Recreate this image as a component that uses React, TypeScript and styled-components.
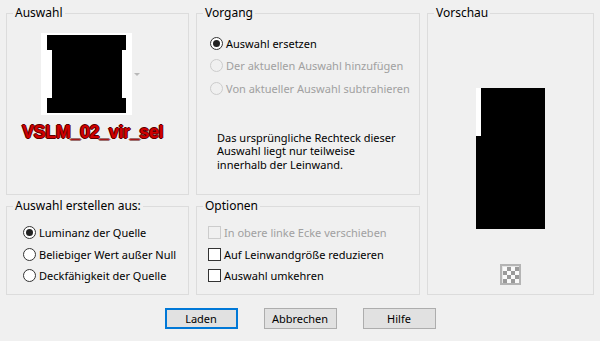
import styled, { createGlobalStyle } from 'styled-components';

const GlobalStyle = createGlobalStyle`
  html, body {
    margin: 0;
    padding: 0;
    background: #f0f0f0;
    font-family: "Noto Sans", "Liberation Sans", sans-serif;
    font-size: 11px;
    color: #000;
  }
`;

const Dialog = styled.div`
  width: 600px;
  height: 341px;
  box-sizing: border-box;
  padding: 5px 0 0 6px;
  display: flex;
  flex-direction: column;
`;

const PanelGrid = styled.div`
  display: grid;
  grid-template-columns: 183px 224px 167px;
  grid-template-rows: 190px 97px;
  column-gap: 7px;
  row-gap: 3px;
`;

const Panel = styled.fieldset<{ $area: string }>`
  margin: 0;
  padding: 0;
  min-width: 0;
  border: 1px solid #dcdcdc;
  display: flex;
  flex-direction: column;
  grid-area: ${(p) => p.$area};
`;

const Legend = styled.legend`
  margin-left: 6px;
  padding: 0 2px;
  font-size: 12px;
  line-height: 16px;
`;

const SourceBox = styled.div`
  padding: 12px 0 0 15px;
  display: flex;
  flex-direction: column;
`;

const ThumbRow = styled.div`
  display: flex;
  align-items: center;
  gap: 2px;
  margin-left: 19px;
`;

const DropArrow = styled.span`
  width: 0;
  height: 0;
  border-left: 3px solid transparent;
  border-right: 3px solid transparent;
  border-top: 3px solid #b8b8b8;
`;

const FileName = styled.div`
  margin-top: 7px;
  font-family: "Liberation Sans", Arial, sans-serif;
  font-weight: 700;
  font-size: 18px;
  line-height: 20px;
  letter-spacing: -0.4px;
  color: #d00000;
  text-shadow: 1px 0 0 #5a0000, -1px 0 0 #5a0000, 0 1px 0 #5a0000, 0 -1px 0 #5a0000;
`;

const OptionList = styled.div<{ $top: number; $left: number; $step: number }>`
  padding: ${(p) => p.$top}px 0 0 ${(p) => p.$left}px;
  display: flex;
  flex-direction: column;
  & > label {
    height: ${(p) => p.$step}px;
  }
`;

const Row = styled.label<{ $disabled?: boolean }>`
  display: flex;
  align-items: center;
  gap: 3px;
  white-space: nowrap;
  color: ${(p) => (p.$disabled ? '#a0a0a0' : '#000')};
`;

const Radio = styled.span<{ $checked?: boolean; $disabled?: boolean }>`
  flex-shrink: 0;
  box-sizing: border-box;
  width: 13px;
  height: 13px;
  border-radius: 50%;
  border: 1px solid ${(p) => (p.$disabled ? '#cccccc' : '#333333')};
  background: ${(p) => (p.$disabled ? '#f0f0f0' : '#ffffff')};
  display: flex;
  align-items: center;
  justify-content: center;
  &::after {
    content: '';
    width: 7px;
    height: 7px;
    border-radius: 50%;
    background: #222;
    display: ${(p) => (p.$checked ? 'block' : 'none')};
  }
`;

const Check = styled.span<{ $disabled?: boolean }>`
  flex-shrink: 0;
  box-sizing: border-box;
  width: 13px;
  height: 13px;
  border: 1px solid ${(p) => (p.$disabled ? '#cccccc' : '#333333')};
  background: ${(p) => (p.$disabled ? '#f0f0f0' : '#ffffff')};
`;

const Note = styled.p`
  margin: 31px 0 0 20px;
  font-size: 11px;
  line-height: 13.5px;
  width: 190px;
`;

const PreviewBox = styled.div`
  flex: 1;
  display: flex;
  flex-direction: column;
  align-items: center;
  padding-top: 67px;
`;

const CheckerButton = styled.div`
  margin-top: 35px;
  width: 21px;
  height: 21px;
  box-sizing: border-box;
  border: 2px solid #b4b4b4;
  display: flex;
`;

const ButtonBar = styled.div`
  margin: 13px 6px 0 0;
  display: flex;
  justify-content: center;
  gap: 26px;
`;

const Button = styled.button<{ $default?: boolean }>`
  width: 73px;
  height: 21px;
  box-sizing: border-box;
  padding: 0;
  font-family: "Noto Sans", "Liberation Sans", sans-serif;
  font-size: 11px;
  color: #000;
  background: #e1e1e1;
  border: ${(p) => (p.$default ? '2px solid #0078d7' : '1px solid #adadad')};
`;

const radios1 = [
  { label: 'Auswahl ersetzen', checked: true },
  { label: 'Der aktuellen Auswahl hinzufügen', disabled: true },
  { label: 'Von aktueller Auswahl subtrahieren', disabled: true },
];

const radios2 = [
  { label: 'Luminanz der Quelle', checked: true },
  { label: 'Beliebiger Wert außer Null' },
  { label: 'Deckfähigkeit der Quelle' },
];

const checks = [
  { label: 'In obere linke Ecke verschieben', disabled: true },
  { label: 'Auf Leinwandgröße reduzieren' },
  { label: 'Auswahl umkehren' },
];

const Thumbnail = () => (
  <svg width="91" height="82" viewBox="0 0 91 82">
    <rect width="91" height="82" fill="#fff" />
    <polygon
      points="6,2 85,2 85,17 81,17 81,65 85,65 85,80 6,80 6,65 11,65 11,17 6,17"
      fill="#000"
    />
  </svg>
);

const Preview = () => (
  <svg width="69" height="141" viewBox="0 0 69 141">
    <rect width="69" height="141" fill="#000" />
    <rect width="5" height="48" fill="#fff" />
  </svg>
);

const Checker = () => (
  <svg width="17" height="17" viewBox="0 0 17 17">
    <rect width="17" height="17" fill="#e6e6e6" />
    {[0, 1, 2, 3].map((r) =>
      [0, 1, 2, 3].map((c) => (
        <rect
          key={`${r}-${c}`}
          x={1 + c * 4}
          y={1 + r * 4}
          width="4"
          height="4"
          fill={(r + c) % 2 === 1 ? '#9a9a9a' : '#fafafa'}
        />
      )),
    )}
  </svg>
);

export default function App() {
  return (
    <Dialog>
      <GlobalStyle />
      <PanelGrid>
        <Panel $area="1 / 1">
          <Legend>Auswahl</Legend>
          <SourceBox>
            <ThumbRow>
              <Thumbnail />
              <DropArrow />
            </ThumbRow>
            <FileName>VSLM_02_vir_sel</FileName>
          </SourceBox>
        </Panel>

        <Panel $area="1 / 2">
          <Legend>Vorgang</Legend>
          <OptionList $top={11} $left={13} $step={22.5}>
            {radios1.map((r) => (
              <Row key={r.label} $disabled={r.disabled}>
                <Radio $checked={r.checked} $disabled={r.disabled} />
                {r.label}
              </Row>
            ))}
          </OptionList>
          <Note>
            Das ursprüngliche Rechteck dieser Auswahl liegt nur teilweise innerhalb der Leinwand.
          </Note>
        </Panel>

        <Panel $area="1 / 3 / span 2 / 4">
          <Legend>Vorschau</Legend>
          <PreviewBox>
            <Preview />
            <CheckerButton>
              <Checker />
            </CheckerButton>
          </PreviewBox>
        </Panel>

        <Panel $area="2 / 1">
          <Legend>Auswahl erstellen aus:</Legend>
          <OptionList $top={8} $left={16} $step={21.5}>
            {radios2.map((r) => (
              <Row key={r.label}>
                <Radio $checked={r.checked} />
                {r.label}
              </Row>
            ))}
          </OptionList>
        </Panel>

        <Panel $area="2 / 2">
          <Legend>Optionen</Legend>
          <OptionList $top={8} $left={11} $step={21.5}>
            {checks.map((c) => (
              <Row key={c.label} $disabled={c.disabled}>
                <Check $disabled={c.disabled} />
                {c.label}
              </Row>
            ))}
          </OptionList>
        </Panel>
      </PanelGrid>

      <ButtonBar>
        <Button $default>Laden</Button>
        <Button>Abbrechen</Button>
        <Button>Hilfe</Button>
      </ButtonBar>
    </Dialog>
  );
}
